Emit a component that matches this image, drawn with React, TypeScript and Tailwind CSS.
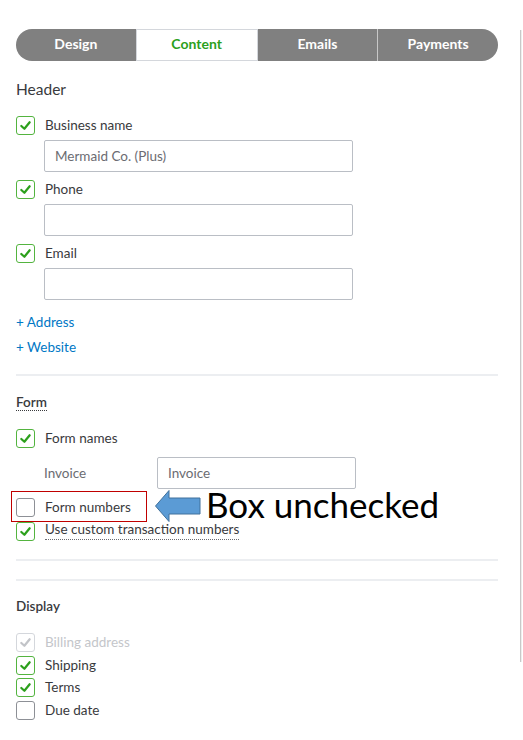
import React from 'react';

type BoxState = 'on' | 'off' | 'disabled';

const font = { fontFamily: 'Lato, "Open Sans", sans-serif' };

const Check: React.FC<{ state: BoxState }> = ({ state }) => {
  const border =
    state === 'on' ? 'border-[#53b43f]' : state === 'disabled' ? 'border-[#d4d7dc]' : 'border-[#8d9096]';
  return (
    <span className={`flex h-[19px] w-[19px] shrink-0 items-center justify-center rounded-[3px] border-[1.5px] bg-white ${border}`}>
      {state !== 'off' && (
        <svg width="13" height="13" viewBox="0 0 14 14">
          <polyline
            points="2.5,7.5 5.8,10.5 11.5,3.5"
            fill="none"
            stroke={state === 'on' ? '#2ca01c' : '#c2c4c8'}
            strokeWidth="2.4"
            strokeLinecap="round"
            strokeLinejoin="round"
          />
        </svg>
      )}
    </span>
  );
};

const Row: React.FC<{ state: BoxState; label: string; className?: string; dotted?: boolean }> = ({
  state,
  label,
  className = '',
  dotted,
}) => (
  <div className={`flex h-[19px] items-center gap-[10px] ${className}`}>
    <Check state={state} />
    <span
      className={`text-[13.5px] leading-none ${state === 'disabled' ? 'text-[#c4c6ca]' : 'text-[#393a3d]'} ${
        dotted ? 'border-b border-dotted border-[#6b6c72] pb-[2px]' : ''
      }`}
    >
      {label}
    </span>
  </div>
);

const TextBox: React.FC<{ value?: string; className?: string }> = ({ value, className = '' }) => (
  <div
    className={`flex h-[32px] items-center rounded-[2px] border border-[#babec5] bg-white px-[10px] text-[13.5px] text-[#6b6c72] ${className}`}
  >
    {value}
  </div>
);

const tabs = ['Design', 'Content', 'Emails', 'Payments'];

export default function App() {
  return (
    <div className="relative flex h-[740px] w-[523px] overflow-hidden bg-white" style={font}>
      <div className="w-[498px] shrink-0 pl-4">
        {/* tab bar */}
        <div className="mt-[29px] flex h-[32px] overflow-hidden rounded-full bg-[#808080]">
          {tabs.map((t, i) => (
            <div
              key={t}
              className={`flex flex-1 items-center justify-center pb-[3px] text-[14px] font-bold leading-none ${
                t === 'Content'
                  ? 'border border-[#d4d7dc] bg-white text-[#2ca01c]'
                  : 'text-white'
              } ${i === 3 ? 'border-l border-[#c8c8c8]' : ''}`}
            >
              {t}
            </div>
          ))}
        </div>

        <div className="mt-[18px] h-5 text-[15.5px] leading-5 text-[#393a3d]">Header</div>

        <Row state="on" label="Business name" className="mt-[17px]" />
        <TextBox value="Mermaid Co. (Plus)" className="ml-[28px] mt-[5px] w-[309px]" />
        <Row state="on" label="Phone" className="mt-[8px]" />
        <TextBox className="ml-[28px] mt-[5px] w-[309px]" />
        <Row state="on" label="Email" className="mt-[8px]" />
        <TextBox className="ml-[28px] mt-[5px] w-[309px]" />

        <div className="mt-[12px] h-5 text-[13.5px] leading-5 text-[#0077c5]">+ Address</div>
        <div className="mt-[5px] h-5 text-[13.5px] leading-5 text-[#0077c5]">+ Website</div>

        <div className="mt-[17px] h-[2px] bg-[#eceef1]" />

        <div className="mt-[16px] flex h-5 items-center">
          <span className="border-b border-dotted border-[#393a3d] text-[13.5px] font-semibold leading-[16px] text-[#393a3d]">
            Form
          </span>
        </div>

        <Row state="on" label="Form names" className="mt-[17px]" />
        <div className="mt-[9px] flex items-center">
          <span className="w-[141px] pl-[28px] text-[13.5px] text-[#6b6c72]">Invoice</span>
          <TextBox value="Invoice" className="w-[199px]" />
        </div>

        <Row state="off" label="Form numbers" className="mt-[9px]" />
        <Row state="on" label="Use custom transaction numbers" className="mt-[5px]" dotted />

        <div className="mt-[18px] h-[2px] bg-[#eceef1]" />
        <div className="mt-[18px] h-[2px] bg-[#eceef1]" />

        <div className="mt-[15px] h-5 text-[13.5px] font-semibold leading-5 text-[#393a3d]">Display</div>

        <Row state="disabled" label="Billing address" className="mt-[17px]" />
        <Row state="on" label="Shipping" className="mt-[4px]" />
        <Row state="on" label="Terms" className="mt-[3px]" />
        <Row state="off" label="Due date" className="mt-[4px]" />
      </div>

      {/* right panel edge */}
      <div className="ml-[22px] mt-[30px] h-[632px] w-[2px] border-l border-[#c8c8c8] bg-[#eeeeee]" />

      {/* annotation overlay */}
      <div className="absolute left-[11px] top-[491px] h-[31px] w-[136px] border border-[#c00000]" />
      <svg className="absolute left-[154px] top-[489px]" width="48" height="35" viewBox="0 0 48 35">
        <polygon
          points="1.5,17 15,1.5 15,9 46,9 46,25 15,25 15,32.5"
          fill="#5b9bd5"
          stroke="#41719c"
          strokeWidth="1"
        />
      </svg>
      <div
        className="absolute left-[206px] top-[484px] text-[35px] leading-[40px] text-black"
        style={{ fontFamily: 'Lato, "Liberation Sans", sans-serif' }}
      >
        Box unchecked
      </div>
    </div>
  );
}
